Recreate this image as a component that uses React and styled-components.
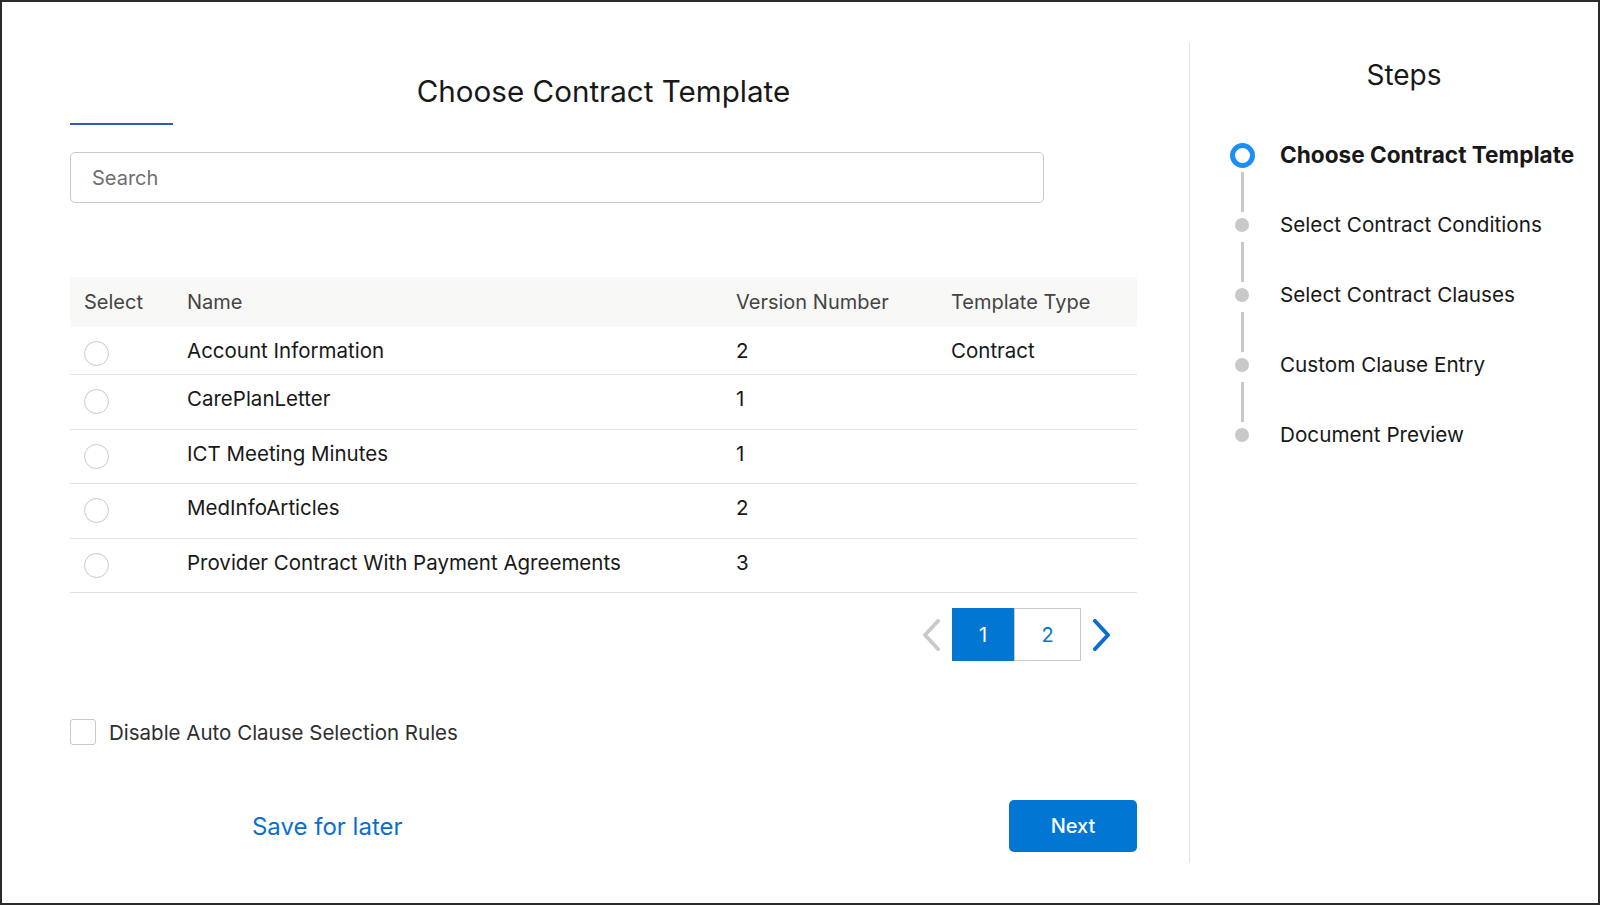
import React, { useState } from 'react'
import styled, { createGlobalStyle } from 'styled-components'

const GlobalStyle = createGlobalStyle`
  body {
    margin: 0;
    font-family: Inter, "Noto Sans", sans-serif;
    color: #181818;
    background: #fff;
  }
  * { box-sizing: border-box; }
`

const Frame = styled.div`
  display: flex;
  width: 1600px;
  height: 905px;
  border: 2px solid #2b2b2b;
  background: #fff;
`

const Main = styled.div`
  display: flex;
  flex-direction: column;
  width: 1067px;
  margin-left: 68px;
`

const Title = styled.h1`
  margin: 71px 0 0;
  font-size: 29.6px;
  line-height: 36px;
  font-weight: 400;
  text-align: center;
  color: #181818;
`

const TabLine = styled.div`
  width: 103px;
  height: 2px;
  margin-top: 14px;
  background: #2a5cb8;
`

const Search = styled.input`
  width: 974px;
  height: 51px;
  margin-top: 27px;
  padding: 0 21px;
  border: 1px solid #c9c9c9;
  border-radius: 5px;
  font-family: inherit;
  font-size: 20px;
  color: #181818;
  outline: none;
  &::placeholder { color: #706e6b; }
`

const Table = styled.div`
  margin-top: 74px;
  display: flex;
  flex-direction: column;
`

const Row = styled.div`
  display: grid;
  grid-template-columns: 103px 549px 215px 1fr;
  height: ${p => p.h}px;
  align-items: ${p => (p.head ? 'center' : 'start')};
  background: ${p => (p.head ? '#f8f8f7' : '#fff')};
  border-bottom: ${p => (p.head ? 'none' : '1.5px solid #e2e2e2')};
`

const Cell = styled.div`
  padding: ${p => (p.head ? '0 14px' : '10px 14px 0')};
  font-size: ${p => (p.head ? 20 : 20.5)}px;
  line-height: 28px;
  color: ${p => (p.head ? '#444' : '#181818')};
  white-space: nowrap;
`

const Radio = styled.button`
  display: block;
  width: 25px;
  height: 25px;
  margin: 14px 0 0 14px;
  padding: 0;
  border: 1.5px solid ${p => (p.on ? '#0176d3' : '#c9c9c9')};
  border-radius: 50%;
  background: ${p => (p.on ? 'radial-gradient(circle, #0176d3 0 5px, #fff 6px)' : '#fff')};
  cursor: pointer;
`

const Pager = styled.div`
  display: flex;
  align-items: center;
  justify-content: flex-end;
  margin-top: 15px;
  padding-right: 25px;
`

const Arrow = styled.svg`
  width: 20px;
  height: 32px;
  margin: ${p => (p.next ? '0 0 0 11px' : '0 11px 0 0')};
  cursor: pointer;
`

const Page = styled.button`
  width: ${p => p.w}px;
  height: 53px;
  border: 1px solid ${p => (p.active ? '#0176d3' : '#c9c9c9')};
  background: ${p => (p.active ? '#0176d3' : '#fff')};
  color: ${p => (p.active ? '#fff' : '#0176d3')};
  font-family: inherit;
  font-size: 20px;
  cursor: pointer;
`

const CheckRow = styled.label`
  display: flex;
  align-items: center;
  gap: 13px;
  margin-top: 58px;
  font-size: 20.5px;
  color: #2e2e2e;
  cursor: pointer;
`

const Box = styled.span`
  width: 26px;
  height: 26px;
  border: 1.5px solid #c9c9c9;
  border-radius: 3px;
  background: #fff;
  display: flex;
  align-items: center;
  justify-content: center;
  color: #0176d3;
  font-size: 16px;
`

const Footer = styled.div`
  display: grid;
  grid-template-columns: 1fr 1fr;
  align-items: center;
  margin-top: 55px;
`

const LinkButton = styled.button`
  justify-self: center;
  margin-right: 19px;
  border: none;
  background: none;
  padding: 0;
  font-family: inherit;
  font-size: 24px;
  color: #0b6fd0;
  cursor: pointer;
`

const NextButton = styled.button`
  justify-self: end;
  width: 128px;
  height: 52px;
  border: none;
  border-radius: 5px;
  background: #0176d3;
  color: #fff;
  font-family: inherit;
  font-size: 20px;
  font-weight: 500;
  cursor: pointer;
`

const Side = styled.div`
  flex: 1;
  margin: 41px 0 40px 52px;
  padding: 15px 0 0 20px;
  border-left: 1.5px solid #e2e2e2;
`

const SideTitle = styled.h2`
  margin: 0;
  font-size: 28px;
  line-height: 34px;
  font-weight: 400;
  text-align: center;
`

const Steps = styled.ol`
  list-style: none;
  margin: 50px 0 0 19px;
  padding: 0;
`

const Step = styled.li`
  display: grid;
  grid-template-columns: 26px 1fr;
  column-gap: 25px;
`

const Marker = styled.div`
  display: flex;
  flex-direction: column;
  align-items: center;
`

const DotBox = styled.div`
  height: 26px;
  display: flex;
  align-items: center;
  justify-content: center;
`

const Dot = styled.span`
  width: ${p => (p.active ? 25 : 14)}px;
  height: ${p => (p.active ? 25 : 14)}px;
  border-radius: 50%;
  background: ${p => (p.active ? '#fff' : '#c9c9c9')};
  border: ${p => (p.active ? '5.5px solid #1b8ff5' : 'none')};
`

const Connector = styled.span`
  width: 3px;
  height: 40px;
  margin: 4px 0 0;
  background: #c9c9c9;
`

const StepLabel = styled.span`
  font-size: ${p => (p.active ? 22.6 : 20.7)}px;
  line-height: 26px;
  font-weight: ${p => (p.active ? 700 : 400)};
  color: #181818;
  white-space: nowrap;
`

const templates = [
  { name: 'Account Information', version: '2', type: 'Contract', h: 48 },
  { name: 'CarePlanLetter', version: '1', type: '', h: 54.5 },
  { name: 'ICT Meeting Minutes', version: '1', type: '', h: 54.5 },
  { name: 'MedInfoArticles', version: '2', type: '', h: 54.5 },
  { name: 'Provider Contract With Payment Agreements', version: '3', type: '', h: 54.5 },
]

const stepNames = [
  'Choose Contract Template',
  'Select Contract Conditions',
  'Select Contract Clauses',
  'Custom Clause Entry',
  'Document Preview',
]

const App = () => {
  const [selected, setSelected] = useState(null)
  const [disabled, setDisabled] = useState(false)
  const [page, setPage] = useState(1)

  return (
    <>
      <GlobalStyle />
      <Frame>
        <Main>
          <Title>Choose Contract Template</Title>
          <TabLine />
          <Search placeholder="Search" />

          <Table>
            <Row head h={50}>
              <Cell head>Select</Cell>
              <Cell head>Name</Cell>
              <Cell head>Version Number</Cell>
              <Cell head>Template Type</Cell>
            </Row>
            {templates.map((t, i) => (
              <Row key={t.name} h={t.h}>
                <div>
                  <Radio on={selected === i} onClick={() => setSelected(i)} aria-label={t.name} />
                </div>
                <Cell>{t.name}</Cell>
                <Cell>{t.version}</Cell>
                <Cell>{t.type}</Cell>
              </Row>
            ))}
          </Table>

          <Pager>
            <Arrow viewBox="0 0 20 32" onClick={() => setPage(1)}>
              <polyline points="17,2 4,16 17,30" fill="none" stroke="#c9c9c9" strokeWidth="3.8" strokeLinecap="round" strokeLinejoin="round" />
            </Arrow>
            <Page w={62} active={page === 1} onClick={() => setPage(1)}>1</Page>
            <Page w={67} active={page === 2} onClick={() => setPage(2)}>2</Page>
            <Arrow next viewBox="0 0 20 32" onClick={() => setPage(2)}>
              <polyline points="3,2 16,16 3,30" fill="none" stroke="#0b6fd0" strokeWidth="4" strokeLinecap="round" strokeLinejoin="round" />
            </Arrow>
          </Pager>

          <CheckRow onClick={() => setDisabled(!disabled)}>
            <Box>{disabled ? '✓' : ''}</Box>
            Disable Auto Clause Selection Rules
          </CheckRow>

          <Footer>
            <LinkButton>Save for later</LinkButton>
            <NextButton>Next</NextButton>
          </Footer>
        </Main>

        <Side>
          <SideTitle>Steps</SideTitle>
          <Steps>
            {stepNames.map((s, i) => (
              <Step key={s}>
                <Marker>
                  <DotBox><Dot active={i === 0} /></DotBox>
                  {i < stepNames.length - 1 && <Connector />}
                </Marker>
                <StepLabel active={i === 0}>{s}</StepLabel>
              </Step>
            ))}
          </Steps>
        </Side>
      </Frame>
    </>
  )
}

export default App
